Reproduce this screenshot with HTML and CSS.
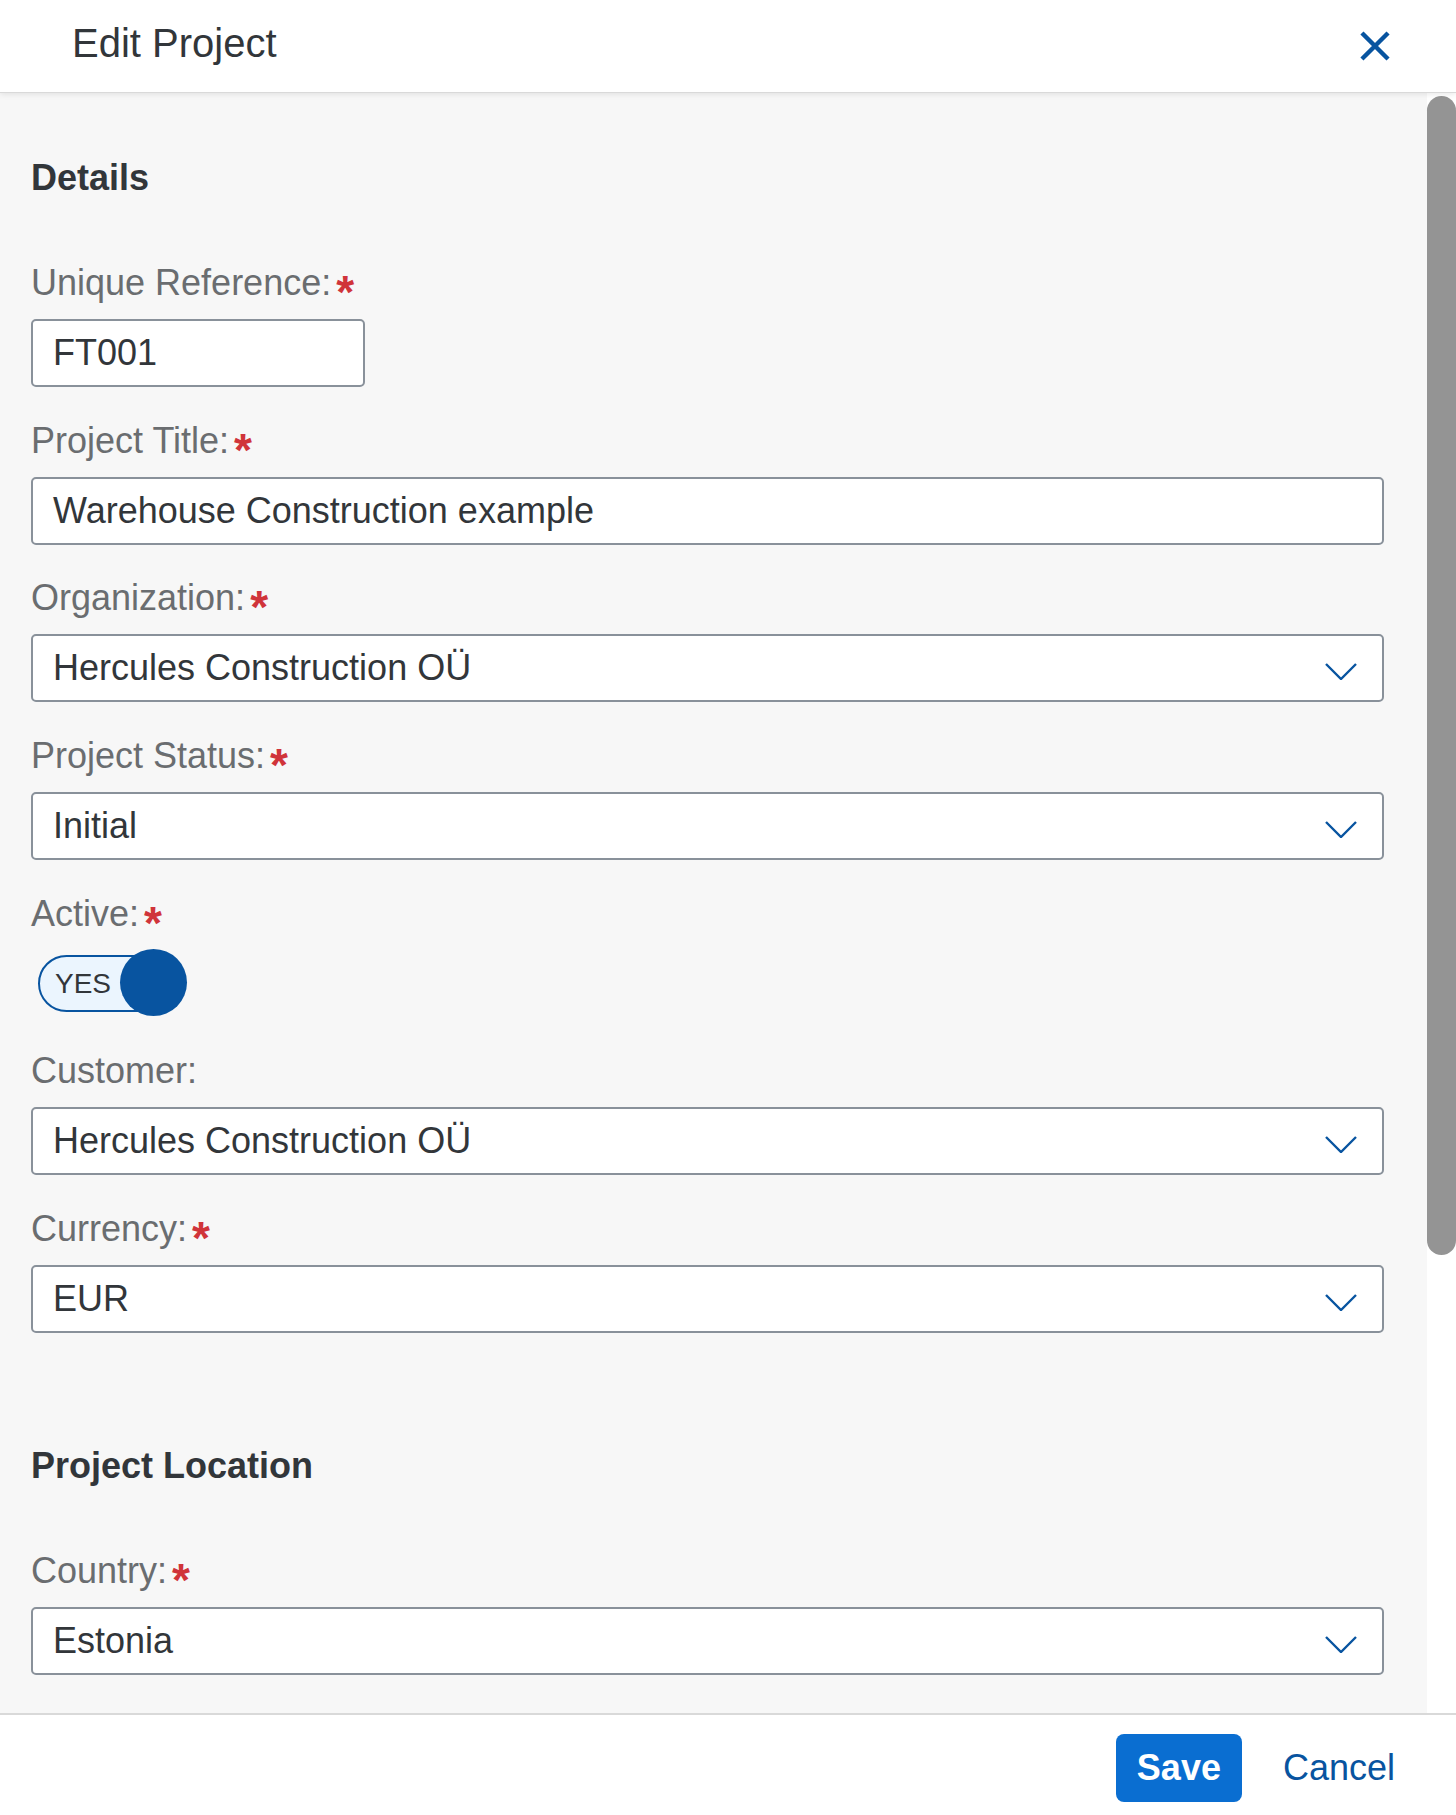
FILE: index.html
```html
<!DOCTYPE html>
<html lang="en">
<head>
<meta charset="utf-8">
<title>Edit Project</title>
<link rel="stylesheet" href="styles.css">
</head>
<body>
<div class="dialog">
  <header class="dialog-header">
    <h1 class="dialog-title">Edit Project</h1>
    <button class="icon-btn" type="button" aria-label="Close">
      <svg width="30" height="30" viewBox="0 0 30 30" aria-hidden="true">
        <path d="M3.5 3.5 L26.5 26.5 M26.5 3.5 L3.5 26.5" fill="none" stroke="#0854a0" stroke-width="4.4" stroke-linecap="square"/>
      </svg>
    </button>
  </header>

  <div class="dialog-body">
    <main class="dialog-content">
      <section class="form-section">
        <h2 class="section-title">Details</h2>

        <div class="field">
          <label class="field-label">Unique Reference:<span class="req">*</span></label>
          <div class="input input-short">FT001</div>
        </div>

        <div class="field">
          <label class="field-label">Project Title:<span class="req">*</span></label>
          <div class="input">Warehouse Construction example</div>
        </div>

        <div class="field">
          <label class="field-label">Organization:<span class="req">*</span></label>
          <div class="input select">
            <span>Hercules Construction OÜ</span>
            <svg class="chevron" width="32" height="17" viewBox="0 0 32 17" aria-hidden="true"><path d="M1 1 L16 16 L31 1" fill="none" stroke="#0854a0" stroke-width="2.4"/></svg>
          </div>
        </div>

        <div class="field">
          <label class="field-label">Project Status:<span class="req">*</span></label>
          <div class="input select">
            <span>Initial</span>
            <svg class="chevron" width="32" height="17" viewBox="0 0 32 17" aria-hidden="true"><path d="M1 1 L16 16 L31 1" fill="none" stroke="#0854a0" stroke-width="2.4"/></svg>
          </div>
        </div>

        <div class="field">
          <label class="field-label">Active:<span class="req">*</span></label>
          <div class="switch-row">
            <div class="switch" role="switch" aria-checked="true">
              <span class="switch-text">YES</span>
              <span class="switch-knob"></span>
            </div>
          </div>
        </div>

        <div class="field">
          <label class="field-label">Customer:</label>
          <div class="input select">
            <span>Hercules Construction OÜ</span>
            <svg class="chevron" width="32" height="17" viewBox="0 0 32 17" aria-hidden="true"><path d="M1 1 L16 16 L31 1" fill="none" stroke="#0854a0" stroke-width="2.4"/></svg>
          </div>
        </div>

        <div class="field">
          <label class="field-label">Currency:<span class="req">*</span></label>
          <div class="input select">
            <span>EUR</span>
            <svg class="chevron" width="32" height="17" viewBox="0 0 32 17" aria-hidden="true"><path d="M1 1 L16 16 L31 1" fill="none" stroke="#0854a0" stroke-width="2.4"/></svg>
          </div>
        </div>
      </section>

      <section class="form-section">
        <h2 class="section-title">Project Location</h2>

        <div class="field">
          <label class="field-label">Country:<span class="req">*</span></label>
          <div class="input select">
            <span>Estonia</span>
            <svg class="chevron" width="32" height="17" viewBox="0 0 32 17" aria-hidden="true"><path d="M1 1 L16 16 L31 1" fill="none" stroke="#0854a0" stroke-width="2.4"/></svg>
          </div>
        </div>
      </section>
    </main>

    <div class="scrollbar" aria-hidden="true">
      <div class="scrollbar-thumb"></div>
    </div>
  </div>

  <footer class="dialog-footer">
    <button class="btn btn-primary" type="button">Save</button>
    <button class="btn btn-ghost" type="button">Cancel</button>
  </footer>
</div>
</body>
</html>
```

FILE: styles.css
```css
html,
body {
  margin: 0;
  height: 100%;
}

body {
  font-family: "Liberation Sans", Arial, sans-serif;
  color: #32363a;
  background: #ffffff;
}

.dialog {
  display: flex;
  flex-direction: column;
  height: 100vh;
}

/* Header */
.dialog-header {
  flex: 0 0 92px;
  box-sizing: border-box;
  display: flex;
  align-items: center;
  justify-content: space-between;
  padding: 0 66px 0 72px;
  background: #ffffff;
  position: relative;
  z-index: 2;
  box-shadow: 0 1px 0 #d9d9d9, 0 2px 6px rgba(0, 0, 0, 0.10);
}

.dialog-title {
  margin: 0;
  padding-bottom: 6px;
  font-size: 40px;
  line-height: 46px;
  font-weight: 400;
  color: #32363a;
}

.icon-btn {
  border: 0;
  background: none;
  padding: 0;
  width: 30px;
  height: 30px;
  display: flex;
  cursor: pointer;
}

/* Body */
.dialog-body {
  flex: 1 1 auto;
  min-height: 0;
  display: flex;
}

.dialog-content {
  flex: 1 1 auto;
  min-width: 0;
  overflow: hidden;
  background: #f7f7f7;
  padding: 66px 43px 24px 31px;
}

.scrollbar {
  flex: 0 0 29px;
  box-sizing: border-box;
  padding-top: 4px;
  background: #ffffff;
}

.scrollbar-thumb {
  height: 1159px;
  background: #949494;
  border-radius: 15px;
}

.form-section + .form-section {
  padding-top: 79px;
}

.section-title {
  margin: 0 0 65px;
  font-size: 36px;
  line-height: 40px;
  font-weight: 700;
  color: #32363a;
}

.field {
  margin-bottom: 33.67px;
}

.field-label {
  display: block;
  margin-bottom: 16px;
  font-size: 36px;
  line-height: 40px;
  color: #6a6d70;
}

.req {
  margin-left: 5px;
  font-size: 46px;
  font-weight: 700;
  line-height: 0;
  vertical-align: -13px;
  color: #d0343a;
}

.input {
  height: 68px;
  box-sizing: border-box;
  display: flex;
  align-items: center;
  padding: 0 20px;
  border: 2px solid #89919a;
  border-radius: 5px;
  background: #ffffff;
  font-size: 36px;
  line-height: 40px;
  color: #32363a;
}

.input-short {
  width: 334px;
}

.select {
  justify-content: space-between;
  padding-right: 25px;
}

.chevron {
  flex: 0 0 auto;
  margin-top: 7px;
}

/* Switch */
.switch-row {
  height: 68px;
  display: flex;
  align-items: center;
}

.switch {
  position: relative;
  width: 140px;
  height: 57px;
  box-sizing: border-box;
  margin-left: 7px;
  padding-left: 15px;
  display: flex;
  align-items: center;
  border: 2px solid #0854a0;
  border-radius: 29px;
  background: #ebf5fe;
}

.switch-text {
  font-size: 28px;
  line-height: 32px;
  color: #32363a;
}

.switch-knob {
  position: absolute;
  left: 80px;
  top: -8px;
  width: 67px;
  height: 67px;
  border-radius: 50%;
  background: #0854a0;
}

/* Footer */
.dialog-footer {
  flex: 0 0 102px;
  box-sizing: border-box;
  display: flex;
  align-items: center;
  justify-content: flex-end;
  gap: 20px;
  padding: 6px 40px 0 0;
  border-top: 2px solid #d9d9d9;
  background: #ffffff;
}

.btn {
  height: 68px;
  padding: 0 21px;
  border: 0;
  border-radius: 8px;
  font-family: inherit;
  font-size: 36px;
  line-height: 40px;
  cursor: pointer;
}

.btn-primary {
  background: #0a6ed1;
  color: #ffffff;
  font-weight: 700;
}

.btn-ghost {
  background: transparent;
  color: #0854a0;
}
```
